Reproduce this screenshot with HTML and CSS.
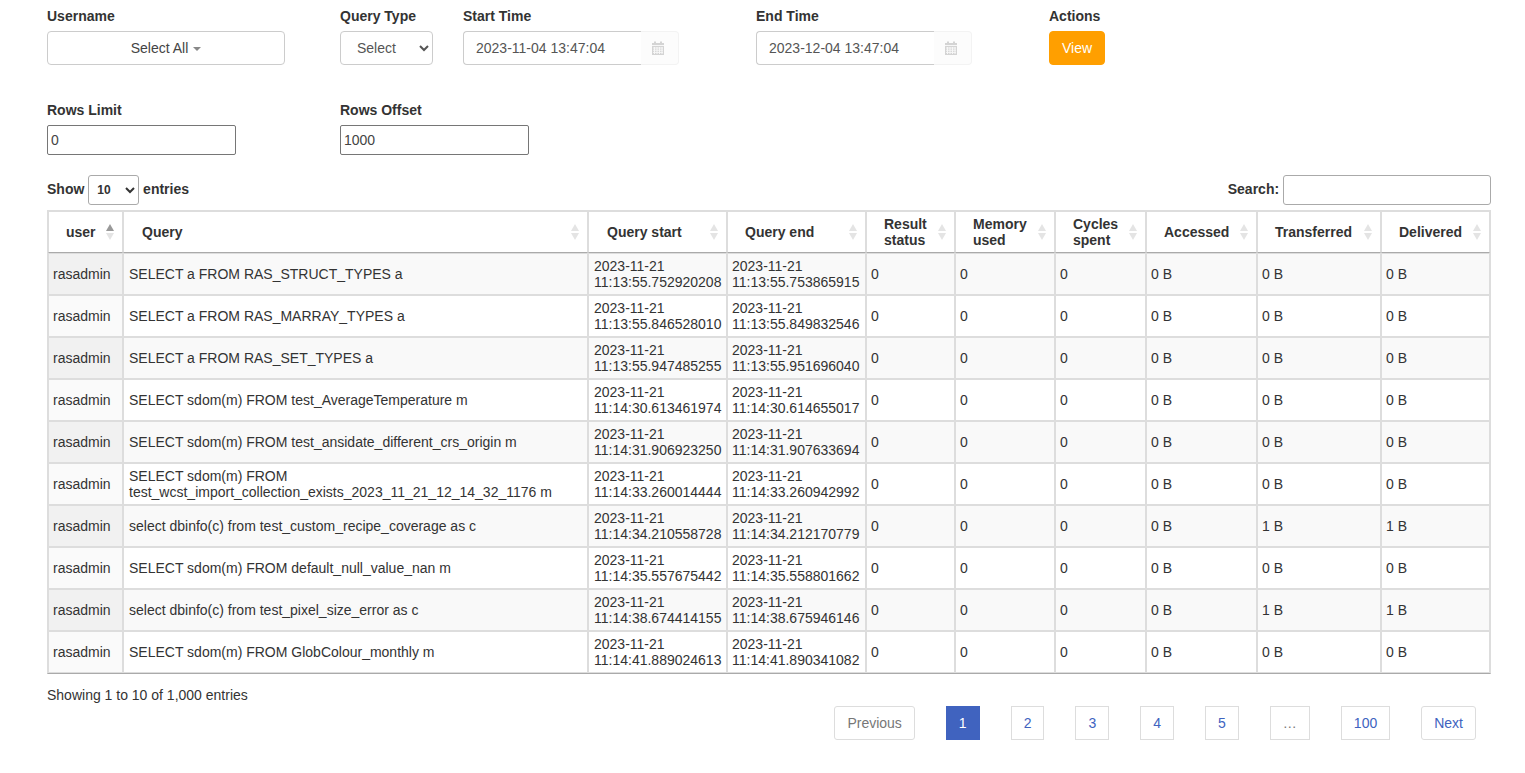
FILE: index.html
```html
<!DOCTYPE html>
<html lang="en">
<head>
  <meta charset="UTF-8"/>
  <title>Query Log</title>
  <link rel="stylesheet" href="styles.css">
</head>
<body>

  <div class="container">
    <!-- Filters -->
    <div class="filter-row">
      <div class="field col-wide">
        <label>Username</label>
        <button class="multi-select">Select All <span class="caret"></span></button>
      </div>
      <div class="field col-narrow">
        <label>Query Type</label>
        <select class="type-select"><option>Select</option></select>
      </div>
      <div class="field col-wide">
        <label>Start Time</label>
        <div class="date-group">
          <input class="date-input" value="2023-11-04 13:47:04">
          <span class="date-addon">
            <svg width="14" height="14" viewBox="0 0 14 14"><path fill="#d4d4d4" d="M1 2h2V0.500h2V2h4V0.500h2V2h2v12H1z"/><path stroke="#f7f7f7" stroke-width="1" d="M1 4.500h12M2 7h10M2 9.200h10M2 11.400h10M3.500 6v7M6 6v7M8.500 6v7M11 6v7"/></svg>
          </span>
        </div>
      </div>
      <div class="field col-wide">
        <label>End Time</label>
        <div class="date-group">
          <input class="date-input" value="2023-12-04 13:47:04">
          <span class="date-addon">
            <svg width="14" height="14" viewBox="0 0 14 14"><path fill="#d4d4d4" d="M1 2h2V0.500h2V2h4V0.500h2V2h2v12H1z"/><path stroke="#f7f7f7" stroke-width="1" d="M1 4.500h12M2 7h10M2 9.200h10M2 11.400h10M3.500 6v7M6 6v7M8.500 6v7M11 6v7"/></svg>
          </span>
        </div>
      </div>
      <div class="field">
        <label>Actions</label>
        <button class="view-btn">View</button>
      </div>
    </div>

    <div class="filter-row rows-row">
      <div class="field col-wide">
        <label>Rows Limit</label>
        <input class="plain-input" value="0">
      </div>
      <div class="field">
        <label>Rows Offset</label>
        <input class="plain-input" value="1000">
      </div>
    </div>

    <!-- Table controls -->
    <div class="table-controls">
      <label class="length">Show <select class="length-select"><option>10</option></select> entries</label>
      <label class="search">Search: <input class="search-input"></label>
    </div>

    <table class="log-table">
      <colgroup>
        <col style="width:75px"><col style="width:465px"><col style="width:139px"><col style="width:139px"><col style="width:89px">
        <col style="width:100px"><col style="width:91px"><col style="width:111px"><col style="width:124px"><col style="width:109px">
      </colgroup>
      <thead>
        <tr>
          <th class="sorted">user</th>
          <th>Query</th>
          <th>Query start</th>
          <th>Query end</th>
          <th>Result status</th>
          <th>Memory used</th>
          <th>Cycles spent</th>
          <th>Accessed</th>
          <th>Transferred</th>
          <th>Delivered</th>
        </tr>
      </thead>
      <tbody>
        <tr>
          <td>rasadmin</td><td>SELECT a FROM RAS_STRUCT_TYPES a</td>
          <td>2023-11-21 11:13:55.752920208</td><td>2023-11-21 11:13:55.753865915</td>
          <td>0</td><td>0</td><td>0</td><td>0 B</td><td>0 B</td><td>0 B</td>
        </tr>
        <tr>
          <td>rasadmin</td><td>SELECT a FROM RAS_MARRAY_TYPES a</td>
          <td>2023-11-21 11:13:55.846528010</td><td>2023-11-21 11:13:55.849832546</td>
          <td>0</td><td>0</td><td>0</td><td>0 B</td><td>0 B</td><td>0 B</td>
        </tr>
        <tr>
          <td>rasadmin</td><td>SELECT a FROM RAS_SET_TYPES a</td>
          <td>2023-11-21 11:13:55.947485255</td><td>2023-11-21 11:13:55.951696040</td>
          <td>0</td><td>0</td><td>0</td><td>0 B</td><td>0 B</td><td>0 B</td>
        </tr>
        <tr>
          <td>rasadmin</td><td>SELECT sdom(m) FROM test_AverageTemperature m</td>
          <td>2023-11-21 11:14:30.613461974</td><td>2023-11-21 11:14:30.614655017</td>
          <td>0</td><td>0</td><td>0</td><td>0 B</td><td>0 B</td><td>0 B</td>
        </tr>
        <tr>
          <td>rasadmin</td><td>SELECT sdom(m) FROM test_ansidate_different_crs_origin m</td>
          <td>2023-11-21 11:14:31.906923250</td><td>2023-11-21 11:14:31.907633694</td>
          <td>0</td><td>0</td><td>0</td><td>0 B</td><td>0 B</td><td>0 B</td>
        </tr>
        <tr>
          <td>rasadmin</td><td>SELECT sdom(m) FROM test_wcst_import_collection_exists_2023_11_21_12_14_32_1176 m</td>
          <td>2023-11-21 11:14:33.260014444</td><td>2023-11-21 11:14:33.260942992</td>
          <td>0</td><td>0</td><td>0</td><td>0 B</td><td>0 B</td><td>0 B</td>
        </tr>
        <tr>
          <td>rasadmin</td><td>select dbinfo(c) from test_custom_recipe_coverage as c</td>
          <td>2023-11-21 11:14:34.210558728</td><td>2023-11-21 11:14:34.212170779</td>
          <td>0</td><td>0</td><td>0</td><td>0 B</td><td>1 B</td><td>1 B</td>
        </tr>
        <tr>
          <td>rasadmin</td><td>SELECT sdom(m) FROM default_null_value_nan m</td>
          <td>2023-11-21 11:14:35.557675442</td><td>2023-11-21 11:14:35.558801662</td>
          <td>0</td><td>0</td><td>0</td><td>0 B</td><td>0 B</td><td>0 B</td>
        </tr>
        <tr>
          <td>rasadmin</td><td>select dbinfo(c) from test_pixel_size_error as c</td>
          <td>2023-11-21 11:14:38.674414155</td><td>2023-11-21 11:14:38.675946146</td>
          <td>0</td><td>0</td><td>0</td><td>0 B</td><td>1 B</td><td>1 B</td>
        </tr>
        <tr>
          <td>rasadmin</td><td>SELECT sdom(m) FROM GlobColour_monthly m</td>
          <td>2023-11-21 11:14:41.889024613</td><td>2023-11-21 11:14:41.890341082</td>
          <td>0</td><td>0</td><td>0</td><td>0 B</td><td>0 B</td><td>0 B</td>
        </tr>
      </tbody>
    </table>

    <div class="table-info">Showing 1 to 10 of 1,000 entries</div>

    <div class="pagination">
      <a class="page-btn disabled rounded">Previous</a>
      <a class="page-btn current">1</a>
      <a class="page-btn">2</a>
      <a class="page-btn">3</a>
      <a class="page-btn">4</a>
      <a class="page-btn">5</a>
      <a class="page-btn disabled">…</a>
      <a class="page-btn">100</a>
      <a class="page-btn rounded">Next</a>
    </div>
  </div>

</body>
</html>
```

FILE: styles.css
```css
* {
  box-sizing: border-box;
}
body {
  font-family: "Liberation Sans", Arial, sans-serif;
  font-size: 14px;
  color: #333;
  margin: 0;
  background-color: #fff;
}
.container {
  padding: 8px 34px 0 47px;
}
.filter-row {
  display: flex;
}
.rows-row {
  margin-top: 37px;
}
.field {
  display: flex;
  flex-direction: column;
  align-items: flex-start;
}
.field label {
  font-weight: bold;
  line-height: 16px;
  margin-bottom: 7px;
}
.col-wide {
  width: 293px;
}
.col-narrow {
  width: 123px;
}
.multi-select {
  width: 238px;
  height: 34px;
  border: 1px solid #ccc;
  border-radius: 4px;
  background-color: #fff;
  color: #444;
  font: inherit;
}
.caret {
  display: inline-block;
  vertical-align: middle;
  margin-left: 1px;
  border-top: 4px solid #888;
  border-left: 4px solid transparent;
  border-right: 4px solid transparent;
}
.type-select {
  width: 93px;
  height: 34px;
  padding: 0 12px;
  border: 1px solid #ccc;
  border-radius: 4px;
  background-color: #fff;
  color: #555;
  font: inherit;
}
.date-group {
  display: flex;
  height: 34px;
}
.date-input {
  width: 178px;
  padding: 0 12px;
  border: 1px solid #ccc;
  border-right: 0;
  border-radius: 4px 0 0 4px;
  color: #555;
  font: inherit;
  outline: none;
}
.date-addon {
  width: 38px;
  display: flex;
  align-items: center;
  justify-content: center;
  padding-right: 4px;
  background-color: #fcfcfc;
  border: 1px solid #f3f3f3;
  border-left: 0;
  border-radius: 0 4px 4px 0;
}
.view-btn {
  width: 56px;
  height: 34px;
  border: 1px solid #ff9f00;
  border-radius: 4px;
  background-color: #ff9f00;
  color: #fff;
  font: inherit;
}
.plain-input {
  width: 189px;
  height: 30px;
  padding: 0 3px;
  border: 1px solid #767676;
  border-radius: 2px;
  color: #444;
  font: inherit;
}
.table-controls {
  display: flex;
  justify-content: space-between;
  align-items: center;
  height: 30px;
  margin-top: 20px;
  font-weight: bold;
}
.length-select {
  width: 51px;
  height: 30px;
  padding: 0 4px;
  border: 1px solid #aaa;
  border-radius: 3px;
  background-color: #fff;
  color: #333;
  font: bold 12px "Liberation Sans", Arial, sans-serif;
}
.search-input {
  width: 208px;
  height: 30px;
  border: 1px solid #aaa;
  border-radius: 3px;
  vertical-align: middle;
}
.log-table {
  width: 1444px;
  table-layout: fixed;
  border-collapse: separate;
  border-spacing: 0;
  border: 1px solid #ddd;
  border-bottom-color: #aaa;
  margin-top: 5px;
}
.log-table th {
  position: relative;
  height: 42px;
  padding: 4px 30px 4px 17px;
  border: 1px solid #ddd;
  border-bottom-color: #aaa;
  text-align: left;
  line-height: 16px;
  vertical-align: middle;
}
.log-table th:nth-child(2),
.log-table th:nth-child(3) {
  padding-left: 18px;
}
.log-table th::before,
.log-table th::after {
  content: "";
  position: absolute;
  right: 8px;
  border-left: 4px solid transparent;
  border-right: 4px solid transparent;
}
.log-table th::before {
  top: 12px;
  border-bottom: 7px solid #e4e4e4;
}
.log-table th::after {
  top: 21px;
  border-top: 7px solid #e4e4e4;
}
.log-table th.sorted::before {
  border-bottom-color: #999;
}
.log-table td {
  height: 42px;
  padding: 4px 0 4px 4px;
  border: 1px solid #ddd;
  line-height: 16px;
  vertical-align: middle;
}
.log-table td:nth-child(2),
.log-table td:nth-child(3) {
  padding-left: 5px;
}
.log-table tbody tr:nth-child(odd) td {
  background-color: #f9f9f9;
}
.log-table tbody tr:nth-child(odd) td:first-child {
  background-color: #f1f1f1;
}
.log-table tbody tr:nth-child(even) td:first-child {
  background-color: #fafafa;
}
.table-info {
  margin-top: 13px;
  line-height: 16px;
}
.pagination {
  display: flex;
  justify-content: flex-end;
  gap: 31px;
  margin-top: 3px;
  padding-right: 15px;
}
.page-btn {
  height: 34px;
  padding: 6px 12px;
  border: 1px solid #ddd;
  line-height: 20px;
  color: #4063bf;
}
.page-btn.rounded {
  border-radius: 3px;
}
.page-btn.disabled {
  color: #777;
}
.page-btn.current {
  background-color: #4063bf;
  border-color: #4063bf;
  color: #fff;
}
```
